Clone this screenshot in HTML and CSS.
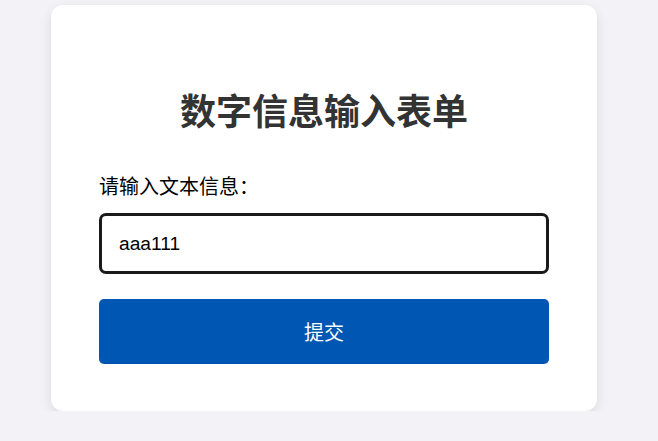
FILE: index.html
```html
<!DOCTYPE html>
<html lang="zh-CN">
<head>
    <meta charset="UTF-8">
    <meta name="viewport" content="width=device-width, initial-scale=1.0">
    <link rel="stylesheet" href="styles.css">
    <title>数字信息输入表单</title>
</head>
<body>
    <div class="card">
        <h1>数字信息输入表单</h1>
        <form class="form">
            <label for="text-info">请输入文本信息：</label>
            <input type="text" id="text-info" value="aaa111">
            <button type="button">提交</button>
        </form>
    </div>
    <script>
        const field = document.getElementById('text-info');
        field.focus();
        field.setSelectionRange(field.value.length, field.value.length);
    </script>
</body>
</html>
```

FILE: styles.css
```css
body {
    background-color: #f2f2f7;
    font-family: "Liberation Sans", "Noto Sans CJK SC", sans-serif;
    margin: 0;
    padding: 5px 0 0 51px;
}

.card {
    box-sizing: border-box;
    width: 546px;
    padding: 48px 48px 47px;
    background-color: #fff;
    border-radius: 12px;
    box-shadow: 0 4px 12px rgba(0, 0, 0, 0.1);
}

h1 {
    margin: 38px 0 38px;
    font-size: 36px;
    line-height: 43px;
    text-align: center;
    color: #333;
}

.form {
    display: flex;
    flex-direction: column;
}

label {
    font-size: 20px;
    line-height: 30px;
    color: #000;
    margin-bottom: 11px;
}

input {
    box-sizing: border-box;
    height: 61px;
    padding: 0 17px;
    font-family: inherit;
    font-size: 19.2px;
    color: #000;
    caret-color: #000;
    border: 3px solid #1a1a1a;
    border-radius: 7px;
    outline: none;
}

button {
    height: 65px;
    margin-top: 25px;
    font-family: inherit;
    font-size: 20px;
    color: #fff;
    background-color: #0057b3;
    border: none;
    border-radius: 5px;
    cursor: pointer;
}
```
